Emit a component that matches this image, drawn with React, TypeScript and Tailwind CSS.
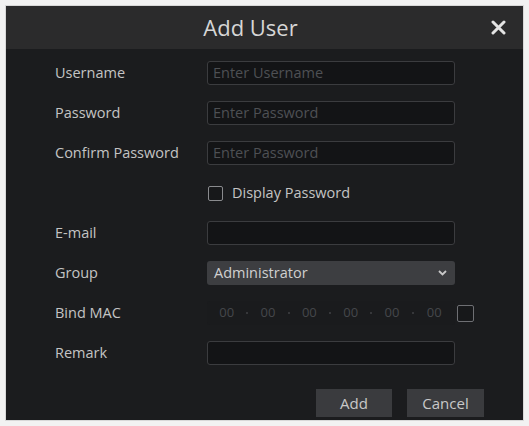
import { ReactNode } from "react";

const font = { fontFamily: '"Open Sans", "Noto Sans", sans-serif' };

function Row({ label, children }: { label?: string; children: ReactNode }) {
  return (
    <div className="flex h-6 items-center">
      <div className="w-[152px] text-[14.5px] text-[#c4c4c4]">{label}</div>
      <div className="flex items-center">{children}</div>
    </div>
  );
}

function TextBox({ placeholder }: { placeholder?: string }) {
  return (
    <div className="flex h-6 w-[248px] items-center rounded-[3px] border border-[#3b3c3f] bg-[#131416] px-[5px] text-[14.5px] text-[#4e5054]">
      {placeholder}
    </div>
  );
}

export default function App() {
  const mac = ["00", "00", "00", "00", "00", "00"];

  return (
    <div className="flex h-[426px] w-[529px] bg-[#f2f2f2] p-[5px]" style={font}>
      <div className="flex w-[519px] flex-col border border-[#d8d8d8] bg-[#1b1c1e]">
        {/* Title bar */}
        <div className="relative flex h-[43px] shrink-0 items-center justify-center bg-[#2b2b2c] pr-[28px]">
          <span className="text-[22px] text-[#d6d6d6]">Add User</span>
          <svg
            className="absolute right-[17px] top-[14px]"
            width="15"
            height="15"
            viewBox="0 0 15 15"
          >
            <path d="M2 2 L13 13 M13 2 L2 13" stroke="#e4e4e4" strokeWidth="3" strokeLinecap="round" />
          </svg>
        </div>

        {/* Form */}
        <div className="flex flex-col gap-4 pl-[49px] pt-[12px]">
          <Row label="Username">
            <TextBox placeholder="Enter Username" />
          </Row>
          <Row label="Password">
            <TextBox placeholder="Enter Password" />
          </Row>
          <Row label="Confirm Password">
            <TextBox placeholder="Enter Password" />
          </Row>
          <Row>
            <div className="flex items-center gap-[9px]">
              <div className="ml-[1px] h-[15px] w-[15px] rounded-[2px] border border-[#8a8b8e] bg-[#17181a]" />
              <span className="text-[14.5px] text-[#c4c4c4]">Display Password</span>
            </div>
          </Row>
          <Row label="E-mail">
            <TextBox />
          </Row>
          <Row label="Group">
            <div className="flex h-6 w-[248px] items-center justify-between rounded-[3px] bg-[#3d3e41] pl-[7px] pr-[8px] text-[14.5px] text-[#d0d0d0]">
              Administrator
              <svg width="9" height="6" viewBox="0 0 9 6">
                <path d="M1 1 L4.5 4.5 L8 1" stroke="#c8c8c8" strokeWidth="1.8" fill="none" />
              </svg>
            </div>
          </Row>
          <Row label="Bind MAC">
            <div className="flex h-6 w-[248px] items-center rounded-[3px] bg-[#1a1b1d]">
              {mac.map((m, i) => (
                <div key={i} className="flex flex-1 items-center">
                  <span className="flex-1 text-center text-[13px] text-[#45474b]">{m}</span>
                  {i < mac.length - 1 && <span className="h-[2px] w-[2px] bg-[#36373a]" />}
                </div>
              ))}
            </div>
            <div className="ml-[2px] h-[17px] w-[17px] rounded-[2px] border border-[#6e6f73] bg-[#17181a]" />
          </Row>
          <Row label="Remark">
            <TextBox />
          </Row>
        </div>

        {/* Footer buttons */}
        <div className="mt-auto flex justify-end gap-[15px] pb-[3px] pr-[39px]">
          <button className="h-7 w-[76px] bg-[#3a3b3e] text-[15px] text-[#c8c8c8]">Add</button>
          <button className="h-7 w-[77px] bg-[#3a3b3e] text-[15px] text-[#c8c8c8]">Cancel</button>
        </div>
      </div>
    </div>
  );
}
